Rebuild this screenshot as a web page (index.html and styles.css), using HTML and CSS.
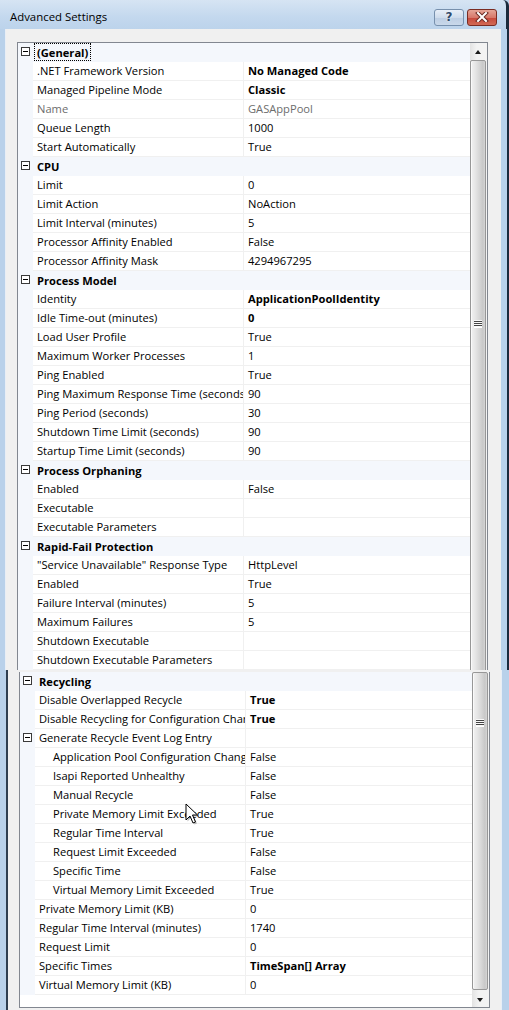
FILE: index.html
```html
<!DOCTYPE html>
<html>
<head>
<meta charset="utf-8">
<link rel="stylesheet" href="styles.css">
</head>
<body>
<div class="page">
  <section class="shot shot-top">
    <div class="titlebar">
      <span class="title">Advanced Settings</span>
      <div class="tbuttons">
        <span class="tbtn help">?</span>
        <span class="tbtn close"><svg width="14" height="10" viewBox="0 0 14 10"><path d="M3 1 L11 9 M11 1 L3 9" stroke="#6b2b24" stroke-width="4" stroke-linecap="square"/><path d="M3 1 L11 9 M11 1 L3 9" stroke="#fff" stroke-width="2" stroke-linecap="square"/></svg></span>
      </div>
    </div>
    <div class="framebody">
      <div class="frame-l"></div>
      <div class="client">
        <div class="grid">
          <div class="rows">
            <div class="row cat"><span class="gut"><i class="minus"></i></span><span class="catname focus">(General)</span></div>
            <div class="row"><span class="gut"></span><span class="name">.NET Framework Version</span><span class="val b">No Managed Code</span></div>
            <div class="row"><span class="gut"></span><span class="name">Managed Pipeline Mode</span><span class="val b">Classic</span></div>
            <div class="row"><span class="gut"></span><span class="name dis">Name</span><span class="val dis">GASAppPool</span></div>
            <div class="row"><span class="gut"></span><span class="name">Queue Length</span><span class="val">1000</span></div>
            <div class="row"><span class="gut"></span><span class="name">Start Automatically</span><span class="val">True</span></div>
            <div class="row cat"><span class="gut"><i class="minus"></i></span><span class="catname">CPU</span></div>
            <div class="row"><span class="gut"></span><span class="name">Limit</span><span class="val">0</span></div>
            <div class="row"><span class="gut"></span><span class="name">Limit Action</span><span class="val">NoAction</span></div>
            <div class="row"><span class="gut"></span><span class="name">Limit Interval (minutes)</span><span class="val">5</span></div>
            <div class="row"><span class="gut"></span><span class="name">Processor Affinity Enabled</span><span class="val">False</span></div>
            <div class="row"><span class="gut"></span><span class="name">Processor Affinity Mask</span><span class="val">4294967295</span></div>
            <div class="row cat"><span class="gut"><i class="minus"></i></span><span class="catname">Process Model</span></div>
            <div class="row"><span class="gut"></span><span class="name">Identity</span><span class="val b">ApplicationPoolIdentity</span></div>
            <div class="row"><span class="gut"></span><span class="name">Idle Time-out (minutes)</span><span class="val b">0</span></div>
            <div class="row"><span class="gut"></span><span class="name">Load User Profile</span><span class="val">True</span></div>
            <div class="row"><span class="gut"></span><span class="name">Maximum Worker Processes</span><span class="val">1</span></div>
            <div class="row"><span class="gut"></span><span class="name">Ping Enabled</span><span class="val">True</span></div>
            <div class="row"><span class="gut"></span><span class="name">Ping Maximum Response Time (seconds)</span><span class="val">90</span></div>
            <div class="row"><span class="gut"></span><span class="name">Ping Period (seconds)</span><span class="val">30</span></div>
            <div class="row"><span class="gut"></span><span class="name">Shutdown Time Limit (seconds)</span><span class="val">90</span></div>
            <div class="row"><span class="gut"></span><span class="name">Startup Time Limit (seconds)</span><span class="val">90</span></div>
            <div class="row cat"><span class="gut"><i class="minus"></i></span><span class="catname">Process Orphaning</span></div>
            <div class="row"><span class="gut"></span><span class="name">Enabled</span><span class="val">False</span></div>
            <div class="row"><span class="gut"></span><span class="name">Executable</span><span class="val"></span></div>
            <div class="row"><span class="gut"></span><span class="name">Executable Parameters</span><span class="val"></span></div>
            <div class="row cat"><span class="gut"><i class="minus"></i></span><span class="catname">Rapid-Fail Protection</span></div>
            <div class="row"><span class="gut"></span><span class="name">"Service Unavailable" Response Type</span><span class="val">HttpLevel</span></div>
            <div class="row"><span class="gut"></span><span class="name">Enabled</span><span class="val">True</span></div>
            <div class="row"><span class="gut"></span><span class="name">Failure Interval (minutes)</span><span class="val">5</span></div>
            <div class="row"><span class="gut"></span><span class="name">Maximum Failures</span><span class="val">5</span></div>
            <div class="row"><span class="gut"></span><span class="name">Shutdown Executable</span><span class="val"></span></div>
            <div class="row"><span class="gut"></span><span class="name">Shutdown Executable Parameters</span><span class="val"></span></div>
          </div>
          <div class="vscroll">
            <div class="arrow up"><i></i></div>
            <div class="thumb thumb-top"><span class="grip"></span></div>
          </div>
        </div>
      </div>
      <div class="frame-r"></div>
    </div>
  </section>

  <section class="shot shot-bottom">
    <div class="frame-l2"></div>
    <div class="client2">
      <div class="grid grid2">
        <div class="rows">
          <div class="row cat"><span class="gut"><i class="minus"></i></span><span class="catname">Recycling</span></div>
          <div class="row"><span class="gut"></span><span class="name">Disable Overlapped Recycle</span><span class="val b">True</span></div>
          <div class="row"><span class="gut"></span><span class="name">Disable Recycling for Configuration Changes</span><span class="val b">True</span></div>
          <div class="row"><span class="gut"><i class="minus"></i></span><span class="name">Generate Recycle Event Log Entry</span><span class="val"></span></div>
          <div class="row sub"><span class="gut"></span><span class="name">Application Pool Configuration Changed</span><span class="val">False</span></div>
          <div class="row sub"><span class="gut"></span><span class="name">Isapi Reported Unhealthy</span><span class="val">False</span></div>
          <div class="row sub"><span class="gut"></span><span class="name">Manual Recycle</span><span class="val">False</span></div>
          <div class="row sub"><span class="gut"></span><span class="name">Private Memory Limit Exceeded</span><span class="val">True</span></div>
          <div class="row sub"><span class="gut"></span><span class="name">Regular Time Interval</span><span class="val">True</span></div>
          <div class="row sub"><span class="gut"></span><span class="name">Request Limit Exceeded</span><span class="val">False</span></div>
          <div class="row sub"><span class="gut"></span><span class="name">Specific Time</span><span class="val">False</span></div>
          <div class="row sub"><span class="gut"></span><span class="name">Virtual Memory Limit Exceeded</span><span class="val">True</span></div>
          <div class="row"><span class="gut"></span><span class="name">Private Memory Limit (KB)</span><span class="val">0</span></div>
          <div class="row"><span class="gut"></span><span class="name">Regular Time Interval (minutes)</span><span class="val">1740</span></div>
          <div class="row"><span class="gut"></span><span class="name">Request Limit</span><span class="val">0</span></div>
          <div class="row"><span class="gut"></span><span class="name">Specific Times</span><span class="val b">TimeSpan[] Array</span></div>
          <div class="row"><span class="gut"></span><span class="name">Virtual Memory Limit (KB)</span><span class="val">0</span></div>
          <div class="fill"></div>
        </div>
        <div class="vscroll">
          <div class="thumb thumb-bottom"><span class="grip"></span></div>
          <div class="arrow down"><i></i></div>
        </div>
      </div>
    </div>
    <div class="frame-r2"></div>
    <svg class="cursor" width="14" height="22" viewBox="0 0 14 22"><path d="M1 1 L1 17 L5 13 L8 20 L10.5 19 L7.5 12 L12.5 12 Z" fill="#000" opacity="0.25" transform="translate(1.5,1.5)"/><path d="M1 1 L1 17 L5 13 L8 20 L10.5 19 L7.5 12 L12.5 12 Z" fill="#fff" stroke="#000" stroke-width="1" stroke-linejoin="miter"/></svg>
  </section>
</div>
</body>
</html>
```
FILE: styles.css
```css
* { box-sizing: border-box; }
html, body { margin: 0; padding: 0; }
body {
  width: 509px;
  height: 1010px;
  overflow: hidden;
  font-family: "Open Sans", "Noto Sans", "Liberation Sans", sans-serif;
  font-size: 11.15px;
  color: #000;
  background: #b9d1ea;
}
.page { display: flex; flex-direction: column; width: 509px; height: 1010px; }

.shot { position: relative; }
.shot-top { height: 670px; display: flex; flex-direction: column; }

/* title bar */
.titlebar {
  height: 29px;
  flex: none;
  display: flex;
  align-items: center;
  padding-left: 10px;
  padding-right: 9px;
  background: linear-gradient(#d6e4f3, #c3d8ee 60%, #bcd3eb);
  border-right: 3px solid #1b2a3c;
  border-top-right-radius: 6px;
}
.title { font-size: 11.4px; flex: 1; padding-top: 4px; }
.tbuttons { display: flex; gap: 3px; margin-top: 5px; }
.tbtn {
  width: 30px; height: 17px;
  display: flex; align-items: center; justify-content: center;
  border-radius: 3px;
}
.help {
  border: 1px solid #7790ad;
  background: linear-gradient(#e8eff8, #cfdcec 50%, #bccde3 51%, #c9d8ea);
  color: #2f4a6b;
  font-weight: bold;
  font-size: 12px;
  font-family: "DejaVu Sans", sans-serif;
  text-shadow: 0 0 2px #fff;
}
.close {
  border: 1px solid #7a2c22;
  background: linear-gradient(#e5a597, #d7786a 50%, #c6473a 51%, #d16a55);
}

.framebody { flex: 1; display: flex; }
.frame-l { width: 6px; background: #b9d1ea; border-right: 1px solid #e8eef6; }
.frame-r { width: 8px; background: #b9d1ea; border-right: 2px solid #1b2a3c; }
.client {
  flex: 1;
  background: #f0f0f0;
  padding: 13px 0 0 11px;
}

.grid {
  display: flex;
  width: 471px;
  border: 1px solid #828790;
  border-bottom: none;
  background: #fff;
  height: 100%;
  overflow: hidden;
}
.rows { width: 452px; display: flex; flex-direction: column; }
.row {
  height: 19px;
  flex: none;
  display: flex;
  align-items: stretch;
  line-height: 18px;
  white-space: nowrap;
}
.gut {
  width: 15px; flex: none;
  background: #f4f7fc;
  position: relative;
}
.minus {
  position: absolute;
  left: 3px; top: 4px;
  width: 9px; height: 9px;
  border: 1px solid #3a3a3a;
  background: #fff;
}
.minus::after {
  content: "";
  position: absolute;
  left: 1px; right: 1px; top: 3px;
  height: 1px;
  background: #000;
}
.cat { background: #f4f7fc; }
.catname {
  font-weight: bold;
  padding: 0 2px 0 2px;
  margin-left: 1px;
  height: 18px;
  line-height: 17px;
  border: 1px solid transparent;
}
.focus { border: 1px dotted #000; }
.name {
  width: 211px; flex: none;
  padding-left: 4px;
  overflow: hidden;
  text-overflow: clip;
  border-bottom: 1px solid #f0f0f0;
  border-right: 1px solid #f0f0f0;
}
.val {
  flex: 1;
  padding-left: 4px;
  border-bottom: 1px solid #f0f0f0;
  overflow: hidden;
}
.sub .name { padding-left: 18px; }
.b { font-weight: bold; }
.dis { color: #6d6d6d; }
.fill { flex: 1; }

/* scrollbar */
.vscroll {
  width: 17px;
  flex: none;
  background: linear-gradient(90deg, #e3e3e3, #f3f3f3 40%, #f3f3f3);
  display: flex;
  flex-direction: column;
}
.arrow {
  height: 17px; flex: none;
  position: relative;
}
.arrow i {
  position: absolute;
  left: 5px; top: 7px;
  width: 0; height: 0;
  border-left: 3.5px solid transparent;
  border-right: 3.5px solid transparent;
}
.arrow.up i { border-bottom: 4px solid #1a1a1a; }
.arrow.down i { border-top: 4px solid #1a1a1a; top: 8px; }
.thumb {
  flex: 1;
  margin-right: 1px;
  border: 1px solid #979797;
  border-radius: 2px;
  background: linear-gradient(90deg, #f2f2f2, #e6e6e6 30%, #d9d9d9 55%, #c8c8c8 85%, #d6d6d6);
  position: relative;
  box-shadow: inset 1px 0 0 #fafafa;
}
.thumb-top { margin-bottom: -20px; }
.grip {
  position: absolute;
  left: 3px; width: 8px; height: 7px;
  background: repeating-linear-gradient(#f8f8f8 0 1px, #444 1px 2px);
  box-shadow: 0 1px 0 #fff;
}
.thumb-top .grip { top: 259px; }
.thumb-bottom .grip { top: 46px; }

/* bottom shot */
.shot-bottom { height: 340px; display: flex; }
.frame-l2 { width: 8px; background: #b9d1ea; border-right: 2px solid #2f3e50; }
.frame-r2 { width: 8px; background: #b9d1ea; border-left: 1px solid #e8eef6; }
.client2 {
  flex: 1;
  background: #f0f0f0;
  padding: 2px 0 2px 11px;
  display: flex;
}
.grid2 {
  height: 336px;
  border-bottom: 1px solid #828790;
  border-top: none;
}
.grid2 .rows { width: 452px; }

.cursor { position: absolute; left: 185px; top: 133px; }
```
